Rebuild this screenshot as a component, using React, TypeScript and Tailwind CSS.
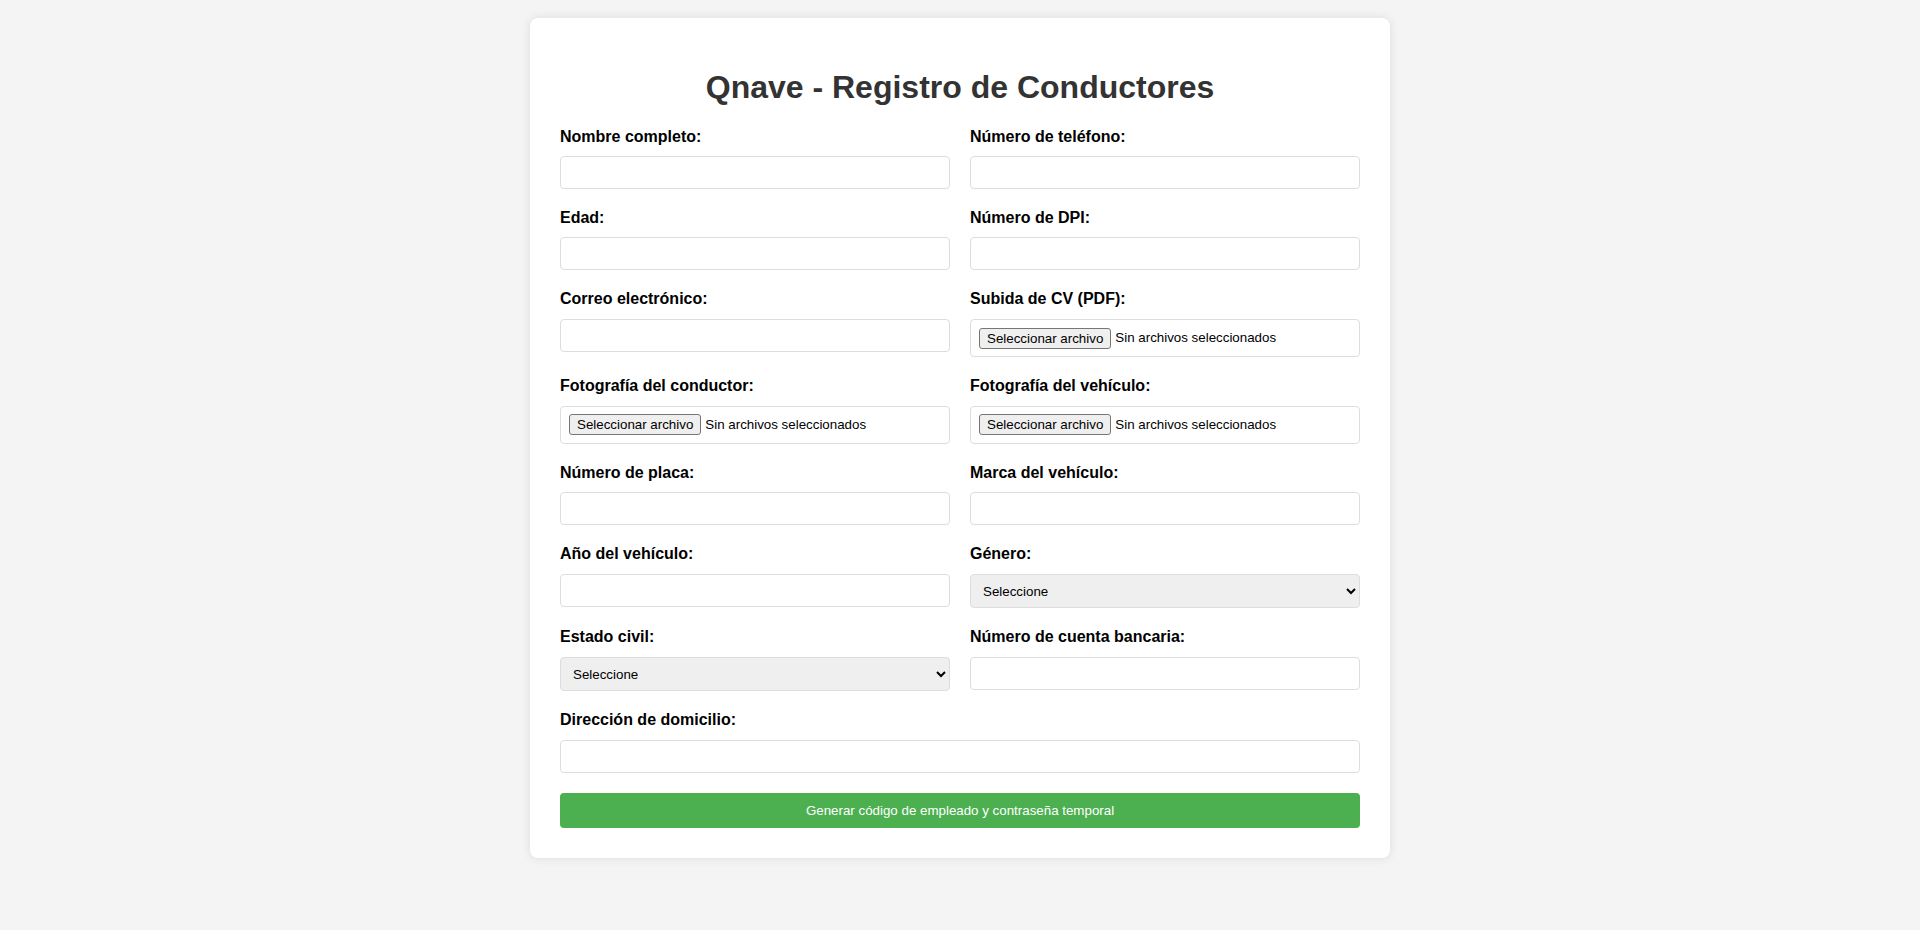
import React from "react";

const labelCls = "block mb-[10px] text-[16px] leading-[18.4px] font-bold text-black";
const inputCls =
  "block w-full h-[33px] px-[8px] py-[8px] border border-[#dddddd] rounded-[4px] bg-white text-[13.333px] leading-[15.33px] outline-none";

function TextField({ label, type = "text" }: { label: string; type?: string }) {
  return (
    <div>
      <label className={labelCls}>{label}</label>
      <input type={type} className={inputCls} />
    </div>
  );
}

function FileField({ label }: { label: string }) {
  return (
    <div>
      <label className={labelCls}>{label}</label>
      <div className="flex items-center w-full h-[38.4px] px-[8px] border border-[#dddddd] rounded-[4px] bg-white text-[13.333px] leading-[15.33px] text-black">
        <span className="inline-block h-[21px] px-[7px] py-[2px] border border-[#767676] rounded-[3px] bg-[#efefef] leading-[15.33px] whitespace-nowrap">
          Seleccionar archivo
        </span>
        <span className="ml-[4px] whitespace-nowrap">Sin archivos seleccionados</span>
      </div>
    </div>
  );
}

function SelectField({ label, options }: { label: string; options: string[] }) {
  return (
    <div>
      <label className={labelCls}>{label}</label>
      <select className="block w-full h-[34.5px] px-[8px] border border-[#dddddd] rounded-[4px] bg-[#efefef] text-[13.333px] text-black outline-none">
        <option>Seleccione</option>
        {options.map((o) => (
          <option key={o}>{o}</option>
        ))}
      </select>
    </div>
  );
}

export default function App() {
  return (
    <div
      className="min-h-screen bg-[#f4f4f4] pt-[18px] pb-[40px]"
      style={{ fontFamily: '"Liberation Sans", Arial, sans-serif' }}
    >
      <div className="mx-auto w-[860px] bg-white rounded-[8px] p-[30px] shadow-[0_0_10px_rgba(0,0,0,0.1)]">
        <h1 className="text-center text-[32px] leading-[36.8px] font-bold text-[#333333] my-[21.44px]">
          Qnave - Registro de Conductores
        </h1>
        <form className="grid grid-cols-2 gap-[20px] items-start" onSubmit={(e) => e.preventDefault()}>
          <TextField label="Nombre completo:" />
          <TextField label="Número de teléfono:" />
          <TextField label="Edad:" />
          <TextField label="Número de DPI:" />
          <TextField label="Correo electrónico:" />
          <FileField label="Subida de CV (PDF):" />
          <FileField label="Fotografía del conductor:" />
          <FileField label="Fotografía del vehículo:" />
          <TextField label="Número de placa:" />
          <TextField label="Marca del vehículo:" />
          <TextField label="Año del vehículo:" />
          <SelectField label="Género:" options={["Masculino", "Femenino", "Otro"]} />
          <SelectField label="Estado civil:" options={["Soltero", "Casado", "Divorciado", "Viudo"]} />
          <TextField label="Número de cuenta bancaria:" />
          <div className="col-span-2">
            <label className={labelCls}>Dirección de domicilio:</label>
            <input type="text" className={inputCls} />
          </div>
          <button
            type="submit"
            className="col-span-2 w-full h-[35px] rounded-[4px] bg-[#4caf50] text-white text-[13.333px] leading-[15.33px] cursor-pointer"
          >
            Generar código de empleado y contraseña temporal
          </button>
        </form>
      </div>
    </div>
  );
}
